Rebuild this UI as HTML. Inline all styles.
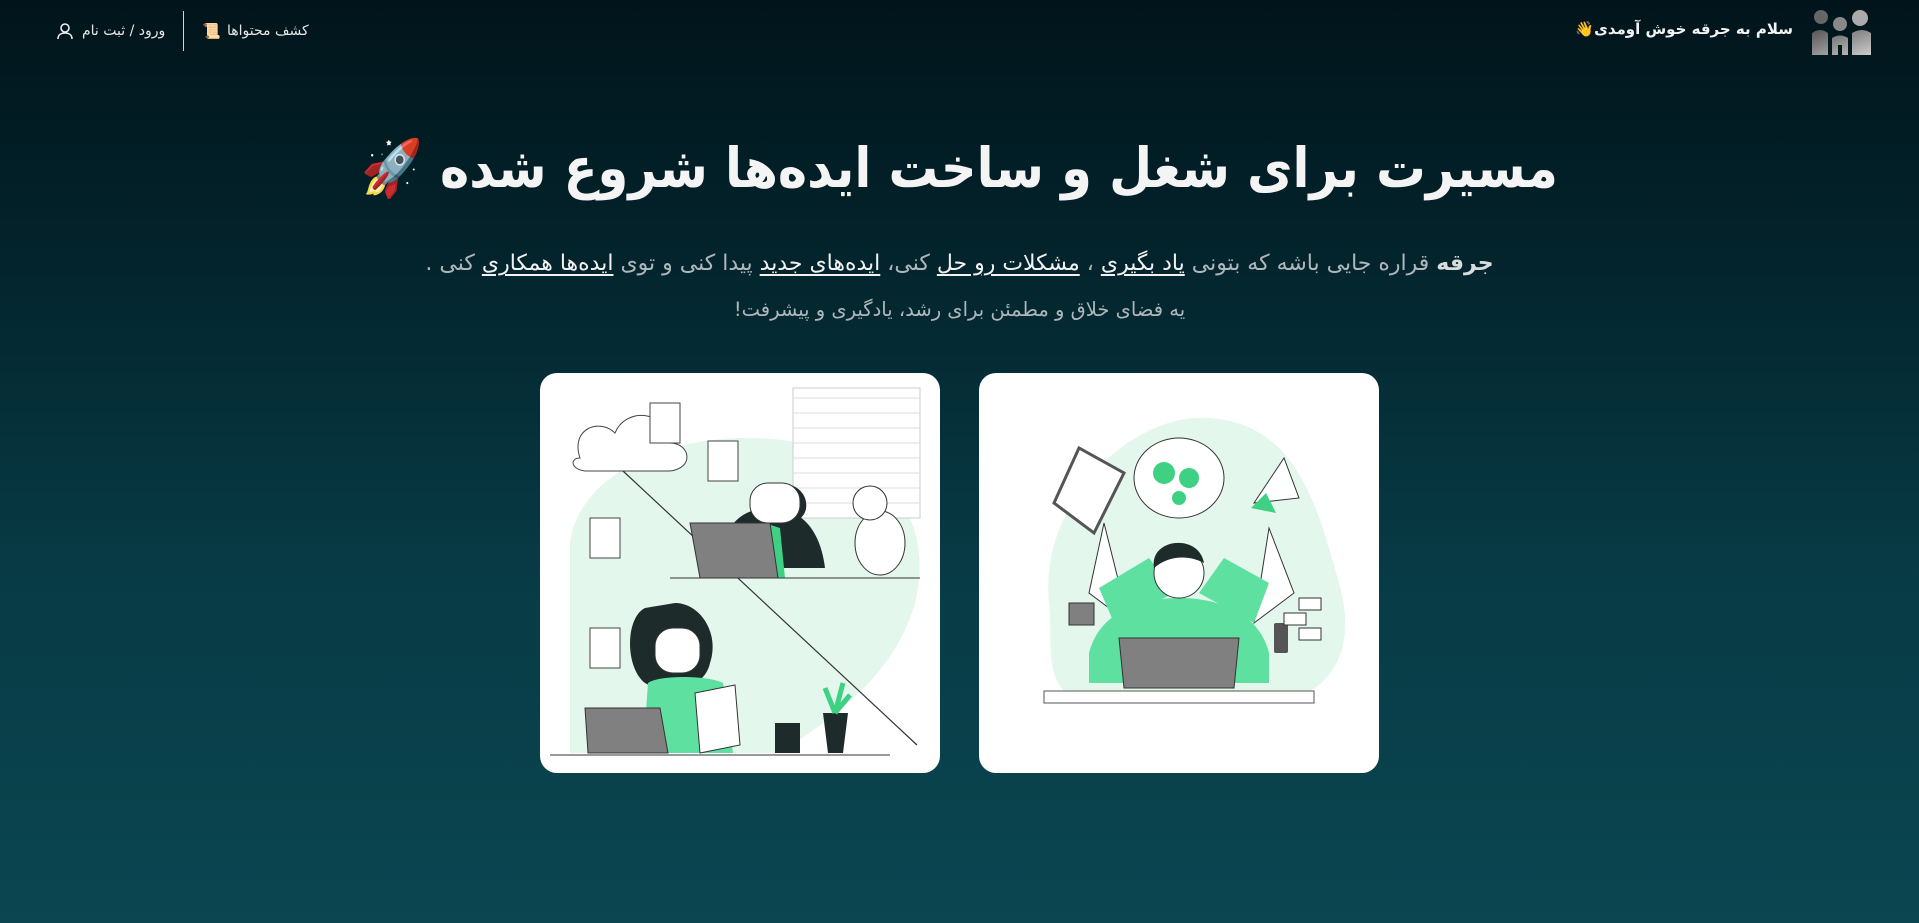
<!DOCTYPE html>
<html lang="fa" dir="rtl">
<head>
<meta charset="utf-8">
<style>
html,body{margin:0;padding:0;}
body{width:1919px;height:923px;overflow:hidden;background:linear-gradient(180deg,#01141b 0%,#03222a 25%,#073a44 60%,#0b4651 100%);font-family:"DejaVu Sans","Noto Sans CJK SC",sans-serif;color:#fff;position:relative;}
.hdr{position:absolute;top:0;left:0;right:0;height:66px;}
.logo{position:absolute;right:47px;top:8px;width:62px;height:50px;}
.greet{position:absolute;right:126px;top:20px;font-size:15px;font-weight:bold;color:#f2f2f2;white-space:nowrap;}
.nav{position:absolute;left:56px;top:11px;height:40px;display:flex;flex-direction:row;align-items:center;direction:ltr;font-size:14px;color:#e6e6e6;white-space:nowrap;}
.div{width:1px;height:40px;background:#cfd4d6;margin:0 18px;}
h1{position:absolute;left:0;right:0;top:139px;margin:0;text-align:center;font-size:49.5px;font-weight:bold;color:#f4f4f4;white-space:nowrap;transform:scaleY(1.12);}
.p1{position:absolute;left:0;right:0;top:251px;text-align:center;font-size:22px;color:#aeb7bb;white-space:nowrap;}
.p1 b{color:#d8dcde;}
.p1 u{color:#f1f1f1;text-underline-offset:4px;}
.p2{position:absolute;left:0;right:0;top:298px;text-align:center;font-size:19.5px;color:#aeb7bb;}
.card{position:absolute;top:373px;width:400px;height:400px;background:#fff;border-radius:17px;overflow:hidden;}
</style>
</head>
<body>
<div class="hdr">
  <svg class="logo" viewBox="0 0 62 50">
    <defs><linearGradient id="lg" x1="0" y1="0" x2="1" y2="1"><stop offset="0" stop-color="#555"/><stop offset="1" stop-color="#ccc"/></linearGradient></defs>
    <circle cx="11" cy="9" r="7" fill="#666"/><circle cx="30" cy="16" r="7" fill="#888"/><circle cx="50" cy="10" r="8" fill="#aaa"/>
    <path d="M2 25 q8-6 16 0 v22 h-16z M22 30 q8-5 16 0 v17 h-6 v-10 h-4 v10 h-6z M42 25 q10-6 19 0 v22 h-19z" fill="url(#lg)"/>
  </svg>
  <div class="greet">سلام به جرقه خوش آومدی👋</div>
  <div class="nav">
    <svg width="18" height="18" viewBox="0 0 18 18" fill="none" stroke="#eee" stroke-width="1.6"><circle cx="9" cy="6" r="4"/><path d="M2 17c0-4 3-6 7-6s7 2 7 6"/></svg>
    <span style="margin-left:8px" dir="rtl">ورود / ثبت نام</span>
    <div class="div"></div>
    <span style="font-size:15px">📜</span>
    <span style="margin-left:6px" dir="rtl">کشف محتواها</span>
  </div>
</div>

<h1>مسیرت برای شغل و ساخت ایده‌ها شروع شده 🚀</h1>
<div class="p1"><b>جرقه</b> قراره جایی باشه که بتونی <u>یاد بگیری</u> ، <u>مشکلات رو حل</u> کنی، <u>ایده‌های جدید</u> پیدا کنی و توی <u>ایده‌ها همکاری</u> کنی .</div>
<div class="p2">یه فضای خلاق و مطمئن برای رشد، یادگیری و پیشرفت!</div>

<div class="card" style="left:540px">
<svg width="400" height="400" viewBox="0 0 400 400">
  <path d="M30 170 C40 90 160 50 260 70 C350 85 395 150 375 230 C355 300 300 340 240 380 L30 380 Z" fill="#e3f7ec"/>
  <rect x="253" y="15" width="127" height="130" fill="#fff" stroke="#ccc"/>
  <g stroke="#ddd"><line x1="253" y1="25" x2="380" y2="25"/><line x1="253" y1="40" x2="380" y2="40"/><line x1="253" y1="55" x2="380" y2="55"/><line x1="253" y1="70" x2="380" y2="70"/><line x1="253" y1="85" x2="380" y2="85"/><line x1="253" y1="100" x2="380" y2="100"/><line x1="253" y1="115" x2="380" y2="115"/><line x1="253" y1="130" x2="380" y2="130"/></g>
  <path d="M40 85 c-10-30 20-40 35-25 c10-25 50-25 55 10 c20 0 25 25 0 28 h-85 c-15-2-15-13-5-13z" fill="#fff" stroke="#444"/>
  <g fill="#fff" stroke="#444"><rect x="110" y="30" width="30" height="40"/><rect x="168" y="68" width="30" height="40"/><rect x="50" y="145" width="30" height="40"/><rect x="50" y="255" width="30" height="40"/></g>
  <line x1="83" y1="98" x2="377" y2="372" stroke="#333" stroke-width="1.2"/>
  <path d="M180 195 c0-40 20-60 50-60 s50 20 55 60z" fill="#1e2b2b"/>
  <path d="M215 140 c-5-30 40-40 50-15 c5 15 -5 25-20 25z" fill="#1e2b2b"/>
  <rect x="210" y="110" width="50" height="40" rx="18" fill="#fff" stroke="#333"/>
  <path d="M225 150 l5 55 h15 l-5-50z" fill="#3ed184"/>
  <path d="M150 150 h80 l8 55 h-78z" fill="#808080" stroke="#333"/>
  <line x1="130" y1="205" x2="380" y2="205" stroke="#333"/>
  <ellipse cx="340" cy="170" rx="25" ry="32" fill="#fff" stroke="#333"/><circle cx="330" cy="130" r="17" fill="#fff" stroke="#333"/>
  <path d="M105 235 c-20 10 -20 60 0 75 c25 15 60 5 65-20 c10-30-10-60-35-60z" fill="#1e2b2b"/>
  <rect x="115" y="255" width="45" height="45" rx="18" fill="#fff" stroke="#333"/>
  <path d="M108 310 c10-8 60-8 75 0 l10 70 h-90z" fill="#5ee0a0"/>
  <path d="M45 335 h75 l8 45 h-80z" fill="#808080" stroke="#333"/>
  <path d="M155 320 l40-8 l5 60 l-40 8z" fill="#fff" stroke="#333"/>
  <rect x="235" y="350" width="25" height="30" fill="#1e2b2b"/>
  <path d="M288 380 l-5-40 h25 l-5 40z" fill="#1e2b2b"/><path d="M295 340 l-10-25 m10 25 l8-30 m-8 30 l15-18" stroke="#3ed184" stroke-width="5"/>
  <line x1="10" y1="382" x2="350" y2="382" stroke="#333"/>
</svg>
</div>

<div class="card" style="left:979px">
<svg width="400" height="400" viewBox="0 0 400 400">
  <path d="M70 230 C60 130 150 40 230 45 C320 50 340 140 360 210 C380 280 350 320 300 330 L110 330 C60 320 75 270 70 230Z" fill="#e3f7ec"/>
  <path d="M75 130 l25-55 l45 25 l-30 60z" fill="#fff" stroke="#555" stroke-width="3"/>
  <ellipse cx="200" cy="105" rx="45" ry="40" fill="#fff" stroke="#333"/>
  <circle cx="185" cy="100" r="11" fill="#3ed184"/><circle cx="210" cy="105" r="10" fill="#3ed184"/><circle cx="200" cy="125" r="7" fill="#3ed184"/>
  <path d="M275 130 l30-45 l15 40z" fill="#fff" stroke="#333"/><path d="M272 135 l15-15 l10 20z" fill="#3ed184"/>
  <path d="M125 150 l-15 70 l40 30z M290 155 l25 65 l-40 30z" fill="#fff" stroke="#333"/>
  <path d="M120 215 l50-30 l25 35 l-60 30z M290 210 l-45-25 l-25 35 l55 30z" fill="#5ee0a0"/>
  <path d="M110 280 c10-40 50-55 90-55 s80 15 90 55 v30 h-180z" fill="#5ee0a0"/>
  <circle cx="200" cy="200" r="25" fill="#fff" stroke="#333"/>
  <path d="M175 195 c-5-30 45-35 50-5 c-15-8-35-8-50 5z" fill="#1e2b2b"/>
  <path d="M140 265 h120 l-5 50 h-110z" fill="#808080" stroke="#333"/>
  <rect x="90" y="230" width="25" height="22" fill="#808080" stroke="#333"/>
  <rect x="295" y="250" width="14" height="30" rx="2" fill="#555"/>
  <rect x="65" y="318" width="270" height="12" fill="#fff" stroke="#555"/>
  <g fill="#fff" stroke="#333"><rect x="320" y="225" width="22" height="12"/><rect x="305" y="240" width="22" height="12"/><rect x="320" y="255" width="22" height="12"/></g>
</svg>
</div>
</body>
</html>
